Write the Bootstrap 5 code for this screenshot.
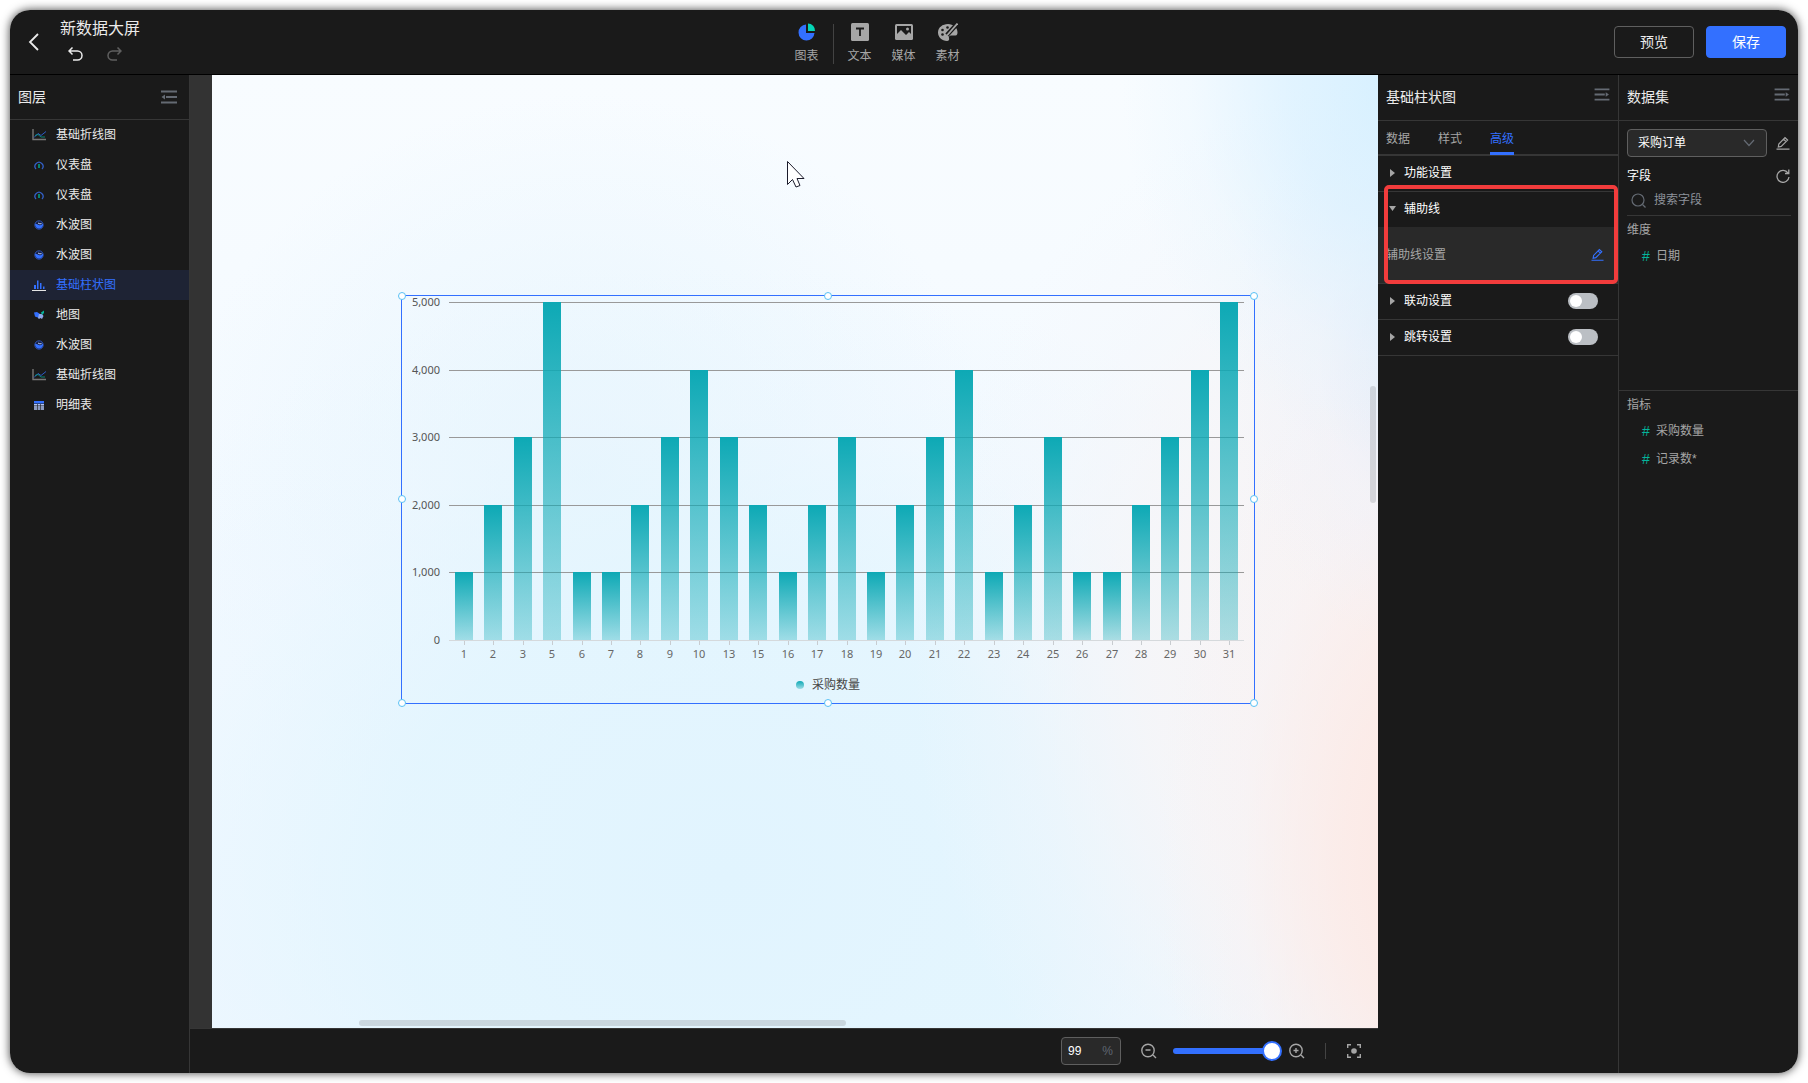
<!DOCTYPE html>
<html lang="zh-CN">
<head>
<meta charset="utf-8">
<meta name="viewport" content="width=device-width, initial-scale=1">
<title>新数据大屏</title>
<link href="https://cdn.jsdelivr.net/npm/bootstrap@5.3.0/dist/css/bootstrap.min.css" rel="stylesheet">
<style>
:root{--bg:#1a1a1a;--line:#363636;--blue:#3370ff;--muted:#a6a6a6}
body{font-family:"Liberation Sans","Noto Sans CJK SC",sans-serif;font-size:12px;line-height:18px;background:#fff;color:#ebebeb;padding:10px;height:100vh;overflow:hidden}
svg{display:block;flex:none}
.app-window{background:var(--bg);border-radius:20px;overflow:hidden;height:100%}
.window-shadow{height:100%;border-radius:20px;box-shadow:0 0 10px rgba(0,0,0,.75)}
button.plain{background:none;border:0;padding:0;color:inherit;line-height:inherit}
.topbar{height:65px;border-bottom:1px solid #000;padding:0 12px 0 18px}
.board-title{font-size:16px;line-height:20px;color:#ebebeb;margin:0;font-weight:400}
.tool{color:var(--muted)!important;width:44px}
.tool svg{margin-bottom:6px}
.tool-rule{width:1px;height:40px;background:#434343;margin:0 4px}
.action{width:80px;height:32px;font-size:14px;line-height:20px;padding:0;border-radius:4px}
.action-ghost{border:1px solid #5f5f5f;color:#ebebeb}
.action-main{background:var(--blue);border-color:var(--blue);color:#fff}
.pane-head{height:46px;border-bottom:1px solid var(--line);padding:0 8px 2px;font-size:14px;color:#ebebeb}
.pane-head h2{font-size:14px;line-height:20px;margin:0;font-weight:400}
.layers{width:180px;border-right:1px solid var(--line)}
.layers .pane-head{height:45px;padding-bottom:0}
.layer{height:30px;padding-left:22px;gap:10px;color:#ebebeb;text-decoration:none}
.layer.active{background:#1e2334;color:var(--blue)}
.stage{min-width:0}
.gutter{background:#333;padding-left:22px;min-height:0}
.board{position:relative;overflow:hidden;
background:
radial-gradient(ellipse 24% 40% at 102% 0,#d6f0ff 0,rgba(216,240,255,.7) 40%,rgba(225,243,255,.25) 75%,rgba(240,248,255,0) 100%),
radial-gradient(ellipse 16% 30% at 103% 30%,rgba(228,236,248,.9) 0,rgba(236,240,250,.4) 50%,rgba(240,244,250,0) 100%),
radial-gradient(ellipse 24% 55% at 105% 82%,#fde7e2 0,rgba(252,234,230,.8) 35%,rgba(249,240,240,.35) 70%,rgba(248,244,246,0) 100%),
radial-gradient(ellipse 42% 62% at 102% 62%,#f8f3f4 0,rgba(247,245,247,.85) 50%,rgba(245,246,250,.35) 78%,rgba(244,247,252,0) 100%),
radial-gradient(ellipse 64% 64% at 44% 84%,#e1f4fe 0,rgba(226,245,254,.85) 45%,rgba(233,246,254,.35) 75%,rgba(240,248,255,0) 100%),
radial-gradient(ellipse 35% 40% at 32% 42%,rgba(226,243,253,.7) 0,rgba(230,245,254,0) 100%),
linear-gradient(#f8fcff,#f2f9ff 60%,#eef7ff)}
.widget{position:absolute;left:182px;top:213px}
.widget text{font-family:"Noto Sans","Noto Sans CJK SC",sans-serif;font-size:11px;fill:#666}
.widget .val{fill:#555}
.widget .key{font-size:12px;fill:#444}
.pointer{position:absolute;left:574px;top:85px}
.bar-h,.bar-v{position:absolute;background:rgba(144,147,153,.3);border-radius:3px}
.bar-h{left:147px;bottom:2px;width:487px;height:6px}
.bar-v{right:2px;top:311px;width:6px;height:117px}
.footbar{height:45px;border-top:1px solid var(--line);padding-right:17px}
.zoom-box{width:60px;height:28px;border:1px solid #5f5f5f;border-radius:4px;background:#292929;padding:0 7px 0 6px;margin-right:20px}
.zoom-box input{width:32px;background:none;border:0;color:#fff;padding:0;outline:0}
.zoom-box label{color:#5f6671}
.zoomer{-webkit-appearance:none;appearance:none;width:110px;height:20px;background:none;margin:0 6px 0 16px}
.zoomer::-webkit-slider-runnable-track{height:6px;border-radius:3px;background:linear-gradient(90deg,var(--blue) 96%,transparent 96%)}
.zoomer::-webkit-slider-thumb{-webkit-appearance:none;width:20px;height:20px;margin-top:-7px;border-radius:50%;border:2px solid var(--blue);background:#fff}
.foot-rule{width:1px;height:16px;background:#434343;margin:0 21px 0 20px}
.props{width:241px;border-right:1px solid var(--line)}
.tabs{height:35px;border-bottom:2px solid var(--line);padding:0 8px;gap:28px}
.tabs a{color:var(--muted);text-decoration:none;line-height:36px;height:34px;border-bottom:3px solid transparent}
.tabs a.active{color:var(--blue);border-color:var(--blue)}
.fold{height:36px;border-bottom:1px solid var(--line);padding:0 20px 2px 12px;color:#fff}
.fold button{gap:9px}
.fold.open{border-color:#292929;padding-left:11px}
.fold.open button{gap:8px}
.fold-body{height:56px;background:#292929;border-bottom:1px solid var(--line);padding:0 14px 2px 8px;color:var(--muted)}
.fold-body button{color:var(--blue)!important}
.marker{position:absolute;left:6px;right:0;top:-7px;height:99px;border:4px solid #f23c3c;border-radius:5px;pointer-events:none}
.toggle{-webkit-appearance:none;appearance:none;width:30px;height:16px;border-radius:8px;background:#bbbfc4;margin:0;position:relative}
.toggle::before{content:"";position:absolute;left:2px;top:2px;width:12px;height:12px;border-radius:50%;background:#fff}
.dataset{width:179px}
.pick{-webkit-appearance:none;appearance:none;width:140px;height:28px;border:1px solid #5f5f5f;border-radius:4px;background:#292929;color:#fff;padding:0 10px;font-size:12px}
.pick-arrow{position:absolute;right:12px;top:10px;pointer-events:none}
.fields-head{margin-top:10px;color:#fff}
.find{border-bottom:1px solid var(--line);height:31px;padding-left:4px;margin-right:7px}
.find input{background:none;border:0;outline:0;color:#fff;padding:0;width:120px}
.find input::placeholder{color:#8d929a;opacity:1}
.dims{height:175px;padding:5px 8px 0;border-bottom:1px solid var(--line);color:var(--muted)}
.metrics{padding:5px 8px 0;color:var(--muted)}
.field{padding-left:15px;gap:6px;height:28px}
.field:first-child{margin-top:3px}
.field b{font-weight:400;font-size:14px;color:#04b49c;width:8px}
</style>
</head>
<body>
<svg width="0" height="0" class="position-absolute" aria-hidden="true">
 <defs>
  <symbol id="i-line" viewBox="0 0 14 12"><path d="M1 0v10.500h13" fill="none" stroke="#777" stroke-width="1.400"/><path d="M2 8.500l4-4 3 2 5-4" fill="none" stroke="#3370ff" opacity=".75"/><path d="M3 6.500l3-1 3 2.500h4" fill="none" stroke="#04b49c" opacity=".7"/></symbol>
  <symbol id="i-gauge" viewBox="0 0 14 12"><path d="M4 10a4 4 0 1 1 6 0" fill="none" stroke="#3360c8" stroke-width="1.300"/><path d="M7 5v4" stroke="#04907c" stroke-width="1.800"/></symbol>
  <symbol id="i-wave" viewBox="0 0 14 12"><circle cx="7" cy="6" r="4.200" fill="#182040" stroke="#2f52b0"/><path d="M3.200 4.500q2 .5 3.800 1.500t4-1.500A4 4 0 1 1 3.200 4.500" fill="#3370ff"/><path d="M6 4q2 1.500 3.500 .5" stroke="#b8ccff" fill="none"/></symbol>
  <symbol id="i-bars" viewBox="0 0 14 12"><path d="M0 11.500h14" stroke="#e5e5e5"/><path d="M2 6h2v4H2zM5 1.500h1.500V10H5zM8 4h1.500v6H8zM11 7.500h1.500V10H11z" fill="#3370ff"/></symbol>
  <symbol id="i-map" viewBox="0 0 14 12"><path d="M2 3.500l3-.5 3 2-1 4-4-1.500z" fill="#3370ff"/><path d="M7 5h3l1.500 2-1.500 3-1.500-1-1.500 1-1-1z" fill="#8fa8ea"/><path d="M9 3.500l3-2v2.500L10 6z" fill="#04b49c"/></symbol>
  <symbol id="i-table" viewBox="0 0 14 12"><path d="M2 2h10v2.500H2z" fill="#3370ff"/><path d="M2 5h3v1.600H2zM5.600 5h2.800v1.600H5.600zM9 5h3v1.600H9zM2 7.200h3v1.500H2zM5.600 7.200h2.800v1.500H5.600zM9 7.200h3v1.500H9zM2 9.300h3v1.400H2zM5.600 9.300h2.800v1.400H5.600zM9 9.300h3v1.400H9z" fill="#b3c5f5"/></symbol>
  <symbol id="i-pen" viewBox="0 0 14 14"><path d="M2.300 11l.5-3L9 1.700l2.600 2.400L5.200 10.400zM7.600 3.200l2.500 2.400M.5 13.200h13" fill="none" stroke="currentColor" stroke-width="1.200"/></symbol>
  <symbol id="i-fold" viewBox="0 0 16 14"><path d="M0 1.500h16M0 7h11M0 12.500h16" stroke="#646a73" stroke-width="2"/><path d="M12 4.500v5L15.500 7z" fill="#646a73"/></symbol>
  <symbol id="i-unfold" viewBox="0 0 16 14"><path d="M0 1.500h16M5 7h11M0 12.500h16" stroke="#646a73" stroke-width="2"/><path d="M4 4.500v5L.5 7z" fill="#646a73"/></symbol>
  <linearGradient id="barFill" x1="0" y1="0" x2="0" y2="1"><stop offset="0" stop-color="#0da9b5"/><stop offset="1" stop-color="#0da9b5" stop-opacity=".32"/></linearGradient>
 </defs>
</svg>
<div class="window-shadow">
<div class="app-window d-flex flex-column">
 <header class="topbar d-flex justify-content-between align-items-center">
  <div class="d-flex align-items-center">
   <button class="plain" aria-label="返回"><svg width="12" height="18" viewBox="0 0 12 18"><path d="M10 1L2 9l8 8" fill="none" stroke="#ebebeb" stroke-width="1.800"/></svg></button>
   <div class="ms-3 mb-1">
    <h1 class="board-title ms-1">新数据大屏</h1>
    <div class="d-flex mt-2 ps-2 ms-1 gap-4">
     <button class="plain" aria-label="撤销"><svg width="15" height="14" viewBox="0 0 15 14"><path d="M4.500 .5L1 4l3.500 3.500M1 4h8.500a4.500 4.500 0 0 1 0 9H5" fill="none" stroke="#ebebeb" stroke-width="1.500"/></svg></button>
     <button class="plain" aria-label="重做" disabled><svg width="15" height="14" viewBox="0 0 15 14"><path d="M10.500 .5L14 4l-3.500 3.500M14 4H5.500a4.500 4.500 0 0 0 0 9H10" fill="none" stroke="#5f5f5f" stroke-width="1.500"/></svg></button>
    </div>
   </div>
  </div>
  <nav class="d-flex align-items-center pt-1">
   <button class="plain tool d-flex flex-column align-items-center"><svg width="18" height="18" viewBox="0 0 18 18"><path d="M8 1.500V10h8.500A8 8 0 1 1 8 1.500z" fill="#3370ff"/><path d="M10 .5A7 7 0 0 1 17 8h-7z" fill="#04d6b6"/></svg>图表</button>
   <div class="tool-rule"></div>
   <button class="plain tool d-flex flex-column align-items-center"><svg width="18" height="18" viewBox="0 0 18 18"><rect width="18" height="18" rx="1.500" fill="#a6a6a6"/><path d="M5 5.500h8M9 5.500V13" stroke="#1a1a1a" stroke-width="1.800"/></svg>文本</button>
   <button class="plain tool d-flex flex-column align-items-center"><svg width="18" height="18" viewBox="0 0 18 18"><rect y="1" width="18" height="16" rx="1.500" fill="#a6a6a6"/><path d="M2 3h14v8l-2-2-3 3-5-5-4 4z" fill="#1a1a1a"/><circle cx="12.500" cy="6" r="1.500" fill="#a6a6a6"/></svg>媒体</button>
   <button class="plain tool d-flex flex-column align-items-center"><svg width="20" height="18" viewBox="0 0 20 18"><path d="M10 1C4.500 1 0 4.500 0 9.500 0 14 4 18 9 18c2 0 2.500-1.500 2-3-.5-1.500.5-2.500 2-2.500h4.500c1.500 0 2-1.500 2-3C19.500 4.500 15 1 10 1z" fill="#a6a6a6"/><g fill="#1a1a1a"><circle cx="4.500" cy="7" r="1.300"/><circle cx="9.500" cy="4.500" r="1.300"/><circle cx="4.500" cy="11.500" r="1.300"/></g><path d="M20 0L9 12" stroke="#1a1a1a" stroke-width="4.500"/><path d="M19.500 .5L9 12.500" stroke="#a6a6a6" stroke-width="1.800"/></svg>素材</button>
  </nav>
  <div class="d-flex" style="gap:12px">
   <button class="btn action action-ghost">预览</button>
   <button class="btn action action-main">保存</button>
  </div>
 </header>
 <div class="d-flex flex-grow-1" style="min-height:0">
  <aside class="layers flex-shrink-0">
   <div class="pane-head d-flex justify-content-between align-items-center"><h2>图层</h2><button class="plain me-1" aria-label="收起图层"><svg width="16" height="14"><use href="#i-unfold"/></svg></button></div>
   <nav>
    <a href="#" class="layer d-flex align-items-center"><svg width="14" height="12"><use href="#i-line"/></svg>基础折线图</a>
    <a href="#" class="layer d-flex align-items-center"><svg width="14" height="12"><use href="#i-gauge"/></svg>仪表盘</a>
    <a href="#" class="layer d-flex align-items-center"><svg width="14" height="12"><use href="#i-gauge"/></svg>仪表盘</a>
    <a href="#" class="layer d-flex align-items-center"><svg width="14" height="12"><use href="#i-wave"/></svg>水波图</a>
    <a href="#" class="layer d-flex align-items-center"><svg width="14" height="12"><use href="#i-wave"/></svg>水波图</a>
    <a href="#" class="layer d-flex align-items-center active"><svg width="14" height="12"><use href="#i-bars"/></svg>基础柱状图</a>
    <a href="#" class="layer d-flex align-items-center"><svg width="14" height="12"><use href="#i-map"/></svg>地图</a>
    <a href="#" class="layer d-flex align-items-center"><svg width="14" height="12"><use href="#i-wave"/></svg>水波图</a>
    <a href="#" class="layer d-flex align-items-center"><svg width="14" height="12"><use href="#i-line"/></svg>基础折线图</a>
    <a href="#" class="layer d-flex align-items-center"><svg width="14" height="12"><use href="#i-table"/></svg>明细表</a>
   </nav>
  </aside>
  <main class="stage flex-grow-1 d-flex flex-column">
   <div class="gutter flex-grow-1 d-flex">
    <div class="board flex-grow-1">
     <svg class="widget" id="chart" width="868" height="423" viewBox="0 0 868 423" role="img" aria-label="采购数量"></svg>
     <svg class="pointer" width="20" height="29" viewBox="0 0 20 29"><path d="M1.500 1.500v23l5-5 3.500 7.500 4-1.500-3-7h7z" fill="#fff" stroke="#1b1b2b"/></svg>
     <div class="bar-h"></div><div class="bar-v"></div>
    </div>
   </div>
   <footer class="footbar d-flex align-items-center justify-content-end">
    <div class="zoom-box d-flex align-items-center justify-content-between"><input id="zoomValue" type="text" value="99"><label for="zoomValue">%</label></div>
    <button class="plain" aria-label="缩小"><svg width="16" height="16" viewBox="0 0 16 16"><path d="M12 12l3 3M4.500 7h5" stroke="#a6a6a6" stroke-width="1.400"/><circle cx="7" cy="7.500" r="6.200" fill="none" stroke="#a6a6a6" stroke-width="1.400"/></svg></button>
    <input class="zoomer" type="range" min="0" max="100" value="99" aria-label="缩放">
    <button class="plain" aria-label="放大"><svg width="16" height="16" viewBox="0 0 16 16"><path d="M12 12l3 3M4.500 7.500h5M7 5v5" stroke="#a6a6a6" stroke-width="1.400"/><circle cx="7" cy="7.500" r="6.200" fill="none" stroke="#a6a6a6" stroke-width="1.400"/></svg></button>
    <div class="foot-rule"></div>
    <button class="plain" aria-label="适应画布"><svg width="14" height="14" viewBox="0 0 14 14"><path d="M.7 4V.7H4M10 .7h3.300V4M13.300 10v3.300H10M4 13.300H.7V10" fill="none" stroke="#a6a6a6" stroke-width="1.400"/><circle cx="7" cy="7" r="2.800" fill="#a6a6a6"/></svg></button>
   </footer>
  </main>
  <aside class="props flex-shrink-0">
   <div class="pane-head d-flex justify-content-between align-items-center"><h2>基础柱状图</h2><button class="plain mb-1" aria-label="收起属性"><svg width="16" height="13"><use href="#i-fold"/></svg></button></div>
   <nav class="tabs d-flex"><a href="#">数据</a><a href="#">样式</a><a href="#" class="active">高级</a></nav>
   <section class="fold d-flex align-items-center"><button class="plain d-flex align-items-center"><svg width="5" height="8"><path d="M0 0v8l5-4z" fill="#a6a6a6"/></svg>功能设置</button></section>
   <div class="position-relative">
    <section class="fold open d-flex align-items-center"><button class="plain d-flex align-items-center"><svg width="7" height="5"><path d="M0 0h7L3.500 5z" fill="#a6a6a6"/></svg>辅助线</button></section>
    <div class="fold-body d-flex align-items-center justify-content-between">辅助线设置<button class="plain" aria-label="编辑辅助线"><svg width="13" height="13"><use href="#i-pen"/></svg></button></div>
    <div class="marker"></div>
   </div>
   <section class="fold d-flex align-items-center justify-content-between"><button class="plain d-flex align-items-center"><svg width="5" height="8"><path d="M0 0v8l5-4z" fill="#a6a6a6"/></svg>联动设置</button><input class="toggle" type="checkbox" role="switch" aria-label="联动设置"></section>
   <section class="fold d-flex align-items-center justify-content-between"><button class="plain d-flex align-items-center"><svg width="5" height="8"><path d="M0 0v8l5-4z" fill="#a6a6a6"/></svg>跳转设置</button><input class="toggle" type="checkbox" role="switch" aria-label="跳转设置"></section>
  </aside>
  <aside class="dataset flex-shrink-0">
   <div class="pane-head d-flex justify-content-between align-items-center"><h2>数据集</h2><button class="plain mb-1" aria-label="收起数据集"><svg width="16" height="13"><use href="#i-fold"/></svg></button></div>
   <div class="ps-2 pt-2">
    <div class="d-flex align-items-center justify-content-between pe-2">
     <div class="position-relative"><select class="pick" aria-label="数据集"><option>采购订单</option></select><svg class="pick-arrow" width="12" height="8" viewBox="0 0 12 8"><path d="M1 1l5 5.500L11 1" fill="none" stroke="#646a73" stroke-width="1.200"/></svg></div>
     <button class="plain" aria-label="编辑数据集" style="color:var(--muted)"><svg width="14" height="14"><use href="#i-pen"/></svg></button>
    </div>
    <div class="fields-head d-flex align-items-center justify-content-between pe-2"><span>字段</span><button class="plain" aria-label="刷新"><svg width="14" height="14" viewBox="0 0 14 14"><path d="M12 4A6 6 0 1 0 13 8M12.800 .5v4H9" fill="none" stroke="#a6a6a6" stroke-width="1.300"/></svg></button></div>
    <div class="find d-flex align-items-center"><svg width="15" height="15" viewBox="0 0 15 15"><circle cx="7" cy="7" r="6" fill="none" stroke="#646a73" stroke-width="1.200"/><path d="M11.500 11.500l3 3" stroke="#646a73" stroke-width="1.200"/></svg><input class="ms-2" type="text" placeholder="搜索字段" aria-label="搜索字段"></div>
   </div>
   <div class="dims">维度<div class="field d-flex align-items-center"><b>#</b>日期</div></div>
   <div class="metrics">指标<div class="field d-flex align-items-center"><b>#</b>采购数量</div><div class="field d-flex align-items-center"><b>#</b>记录数*</div></div>
  </aside>
 </div>
</div>
</div>
<script src="https://cdn.jsdelivr.net/npm/bootstrap@5.3.0/dist/js/bootstrap.bundle.min.js"></script>
<script>
const days=[1,2,3,5,6,7,8,9,10,13,15,16,17,18,19,20,21,22,23,24,25,26,27,28,29,30,31];
const counts=[1,2,3,5,1,1,2,3,4,3,2,1,2,3,1,2,3,4,1,2,3,1,1,2,3,4,5];
const left=55,right=850,base=352,unit=67.6,step=(right-left)/days.length;
let out='';
for(let v=0;v<=5;v++){
  const y=Math.round(base-v*unit)+.5;
  out+=`<path d="M${left} ${y}H${right}" stroke="${v?'#999':'#d5d9dc'}"/><text class="val" x="46" y="${y+3}" text-anchor="end">${(v*1000).toLocaleString('en-US')}</text>`;
}
days.forEach((d,i)=>{
  const cx=Math.round(left+step*(i+.5)),h=Math.round(counts[i]*unit);
  out+=`<rect x="${cx-9}" y="${base-h}" width="18" height="${h}" fill="url(#barFill)"/><path d="M${cx+.5} 353v4" stroke="#c8ccd0"/><text x="${cx}" y="370" text-anchor="middle">${d}</text>`;
});
out+='<circle cx="406" cy="397" r="4" fill="url(#barFill)"/><text class="key" x="418" y="401">采购数量</text><rect x="7.500" y="7.500" width="853" height="408" fill="none" stroke="#3370ff"/>';
for(const x of [8,434,860])for(const y of [8,211,415])if(x!==434||y!==211)out+=`<circle cx="${x}" cy="${y}" r="3.500" fill="#fff" stroke="#59c1f5"/>`;
document.getElementById('chart').innerHTML=out;
</script>
</body>
</html>
